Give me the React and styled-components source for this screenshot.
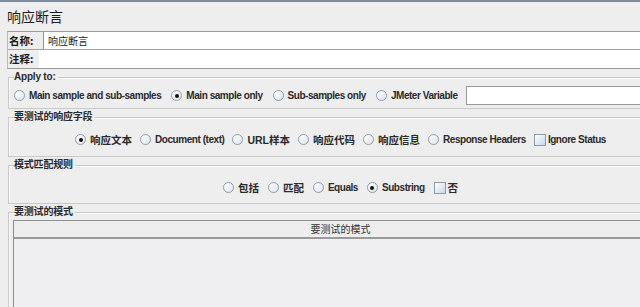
import styled, { createGlobalStyle } from "styled-components";

const GlobalStyle = createGlobalStyle`
  html, body {
    margin: 0;
    padding: 0;
    background: #eeeeef;
    overflow: hidden;
  }
  body {
    font-family: "Liberation Sans", "Noto Sans CJK SC", sans-serif;
    color: #222;
  }
`;

const applyOptions = [
  { label: "Main sample and sub-samples" },
  { label: "Main sample only", checked: true },
  { label: "Sub-samples only" },
  { label: "JMeter Variable" },
];

const fieldOptions = [
  { label: "响应文本", checked: true, cjk: true },
  { label: "Document (text)" },
  { label: "URL样本", cjk: true },
  { label: "响应代码", cjk: true },
  { label: "响应信息", cjk: true },
  { label: "Response Headers" },
];

const ruleOptions = [
  { label: "包括", cjk: true },
  { label: "匹配", cjk: true },
  { label: "Equals" },
  { label: "Substring", checked: true },
];

function Radio({ label, checked, cjk }) {
  return (
    <Option>
      <RadioDot $checked={checked} />
      <OptionText $cjk={cjk}>{label}</OptionText>
    </Option>
  );
}

function Check({ label, cjk }) {
  return (
    <Option>
      <CheckBox />
      <OptionText $tight $cjk={cjk}>
        {label}
      </OptionText>
    </Option>
  );
}

function App() {
  return (
    <Page>
      <GlobalStyle />
      <TopLine />
      <Title>响应断言</Title>
      <NameBox>
        <NameRow>
          <FieldLabel>名称:</FieldLabel>
          <TextInput defaultValue="响应断言" />
        </NameRow>
        <NameRow $last>
          <FieldLabel $narrow>注释:</FieldLabel>
          <TextInput $plain defaultValue="" />
        </NameRow>
      </NameBox>

      <Group>
        <Legend>Apply to:</Legend>
        <OptionRow $gap={10} $top={3} $bottom={3}>
          {applyOptions.map((o) => (
            <Radio key={o.label} {...o} />
          ))}
          <VarInput />
        </OptionRow>
      </Group>

      <Group>
        <Legend>要测试的响应字段</Legend>
        <OptionRow $center $gap={8} $top={7} $bottom={7}>
          {fieldOptions.map((o) => (
            <Radio key={o.label} {...o} />
          ))}
          <Check label="Ignore Status" />
        </OptionRow>
      </Group>

      <Group>
        <Legend>模式匹配规则</Legend>
        <OptionRow $center $gap={9} $top={7} $bottom={6}>
          {ruleOptions.map((o) => (
            <Radio key={o.label} {...o} />
          ))}
          <Check label="否" cjk />
        </OptionRow>
      </Group>

      <Group>
        <Legend>要测试的模式</Legend>
        <Table>
          <TableHead>要测试的模式</TableHead>
          <TableBody />
        </Table>
      </Group>
    </Page>
  );
}

const Page = styled.div`
  width: 668px;
  height: 307px;
  overflow: hidden;
  background: #eeeeef;
`;

const TopLine = styled.div`
  height: 2px;
  background: #7f8c98;
`;

const Title = styled.div`
  padding: 5px 0 0 7px;
  height: 24px;
  font-size: 14px;
  line-height: 18px;
  font-family: "Noto Sans CJK SC", sans-serif;
  color: #1c1c1c;
`;

const NameBox = styled.div`
  margin-left: 7px;
  border-top: 1px solid #9c9c9c;
  border-left: 1px solid #b8b8b8;
  border-bottom: 1px solid #9c9c9c;
`;

const NameRow = styled.div`
  display: flex;
  align-items: stretch;
  height: ${(p) => (p.$last ? "18px" : "17px")};
  border-bottom: ${(p) => (p.$last ? "none" : "1px solid #a4a4a4")};
`;

const FieldLabel = styled.div`
  width: ${(p) => (p.$narrow ? "30px" : "34px")};
  padding-left: 1px;
  font-family: "Noto Sans CJK SC", sans-serif;
  font-weight: 700;
  font-size: 10.5px;
  line-height: 17px;
  color: #1a1a1a;
`;

const TextInput = styled.input`
  flex: 1;
  min-width: 0;
  border: none;
  border-left: ${(p) => (p.$plain ? "none" : "1px solid #8f8f8f")};
  background: #fff;
  padding: 0 0 0 4px;
  margin: 0;
  font-family: "Noto Sans CJK SC", sans-serif;
  font-size: 10px;
  color: #222;
  outline: none;
`;

const Group = styled.fieldset`
  margin: 2px 0 0 8px;
  padding: 0 0 0 5px;
  border: 1px solid #c9c9cc;
  box-shadow: inset 1px 1px 0 #fafafa;
  min-width: 0;
`;

const Legend = styled.legend`
  padding: 0 2px 0 0;
  margin-left: 0;
  font-size: 10px;
  line-height: 12px;
  font-weight: 700;
  color: #2a2a2a;
  letter-spacing: -0.2px;
`;

const OptionRow = styled.div`
  display: flex;
  align-items: center;
  justify-content: ${(p) => (p.$center ? "center" : "flex-start")};
  gap: ${(p) => p.$gap}px;
  height: 19px;
  padding: ${(p) => `${p.$top}px 0 ${p.$bottom}px`};
`;

const Option = styled.label`
  display: flex;
  align-items: center;
  gap: 4px;
  white-space: nowrap;
`;

const RadioDot = styled.span`
  position: relative;
  width: 9px;
  height: 9px;
  border-radius: 50%;
  border: 1px solid #8d9caf;
  background: linear-gradient(135deg, #ffffff 0%, #dfe5ec 100%);
  flex: none;

  &::after {
    content: "";
    display: ${(p) => (p.$checked ? "block" : "none")};
    position: absolute;
    left: 2.5px;
    top: 2.5px;
    width: 4px;
    height: 4px;
    border-radius: 50%;
    background: #111;
  }
`;

const CheckBox = styled.span`
  width: 10px;
  height: 10px;
  border: 1px solid #8d9aa8;
  background: linear-gradient(135deg, #ffffff 0%, #c9d8e8 100%);
  flex: none;
`;

const OptionText = styled.span`
  font-size: ${(p) => (p.$cjk ? "10.5px" : "10px")};
  font-weight: 700;
  letter-spacing: ${(p) => (p.$cjk ? "0" : "-0.45px")};
  color: #2a2a2a;
  margin-left: ${(p) => (p.$tight ? "-2px" : "0")};
`;

const VarInput = styled.div`
  flex: 1;
  height: 17px;
  margin-left: -2px;
  background: #fff;
  border: 1px solid #9a9a9a;
  border-right: none;
`;

const Table = styled.div`
  margin: 2px 0 0 -1px;
  border: 1px solid #8f8f8f;
  border-right: none;
  border-bottom: none;
  height: 100px;
  display: flex;
  flex-direction: column;
`;

const TableHead = styled.div`
  height: 16px;
  border-bottom: 2px solid #9a9a9a;
  text-align: center;
  font-family: "Noto Sans CJK SC", sans-serif;
  font-size: 10px;
  line-height: 16px;
  color: #333;
`;

const TableBody = styled.div`
  flex: 1;
  background: #efeff1;
`;

export default App;
